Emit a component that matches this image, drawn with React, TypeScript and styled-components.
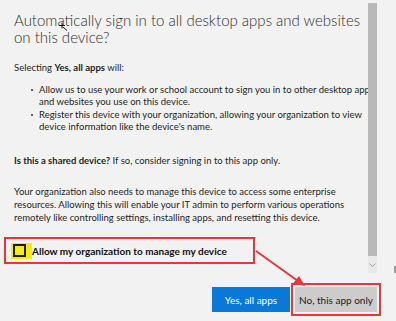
import React from "react";
import styled, { createGlobalStyle } from "styled-components";

const GlobalStyle = createGlobalStyle`
  html, body {
    margin: 0;
    padding: 0;
    background: #f2f2f2;
  }
  * {
    box-sizing: border-box;
  }
`;

const Page = styled.div`
  position: relative;
  width: 396px;
  height: 321px;
  overflow: hidden;
  background: #f2f2f2;
  display: flex;
  flex-direction: column;
  font-family: "Segoe UI", Lato, "Open Sans", sans-serif;
  color: #1f1f1f;
`;

const Main = styled.div`
  display: flex;
  height: 273px;
`;

const Content = styled.div`
  width: 368px;
  flex: none;
  padding: 12px 0 0 14px;
  overflow: hidden;
`;

const Title = styled.h1`
  margin: 0;
  font-size: 15px;
  font-weight: 300;
  line-height: 17px;
  color: #2e2e2e;
`;

const Text = styled.p`
  margin: ${(p: { $top: number }) => p.$top}px 0 0;
  font-size: 9.5px;
  line-height: 13px;
  white-space: nowrap;
`;

const BulletList = styled.ul`
  list-style: none;
  margin: 10px 0 0;
  padding: 0 0 0 25px;
  font-size: 9.5px;
  line-height: 12px;
  white-space: nowrap;
`;

const Bullet = styled.li`
  position: relative;
  margin-bottom: 1px;

  &::before {
    content: "";
    position: absolute;
    left: -8px;
    top: 5px;
    width: 2px;
    height: 2px;
    border-radius: 50%;
    background: #333;
  }
`;

const Highlight = styled.div`
  margin: 13px 0 0 -10px;
  width: 251px;
  height: 27px;
  border: 2px solid #e8363b;
  display: flex;
  align-items: center;
  padding-left: 5px;
`;

const Marker = styled.span`
  width: 21px;
  height: 16px;
  background: #f5ee00;
  display: flex;
  align-items: center;
  padding-left: 2px;
`;

const Box = styled.span`
  width: 13px;
  height: 13px;
  border: 2px solid #1b1b1b;
`;

const CheckLabel = styled.span`
  font-size: 10px;
  font-weight: 700;
  color: #111;
  white-space: nowrap;
`;

const Dot = styled.div`
  margin: 9px 0 0 1px;
  width: 2px;
  height: 2px;
  background: #7aa8dc;
`;

const ScrollTrack = styled.div`
  width: 9px;
  margin-top: 3px;
  display: flex;
  flex-direction: column;
`;

const Thumb = styled.div`
  flex: 1;
  background: #b9b9b9;
`;

const ScrollButton = styled.div`
  height: 17px;
  background: #e9e9e9;
  display: flex;
  align-items: center;
  justify-content: center;
`;

const Footer = styled.div`
  display: flex;
  align-items: center;
  margin-top: 10px;
  padding-left: 212px;
  gap: 1px;
`;

const Button = styled.button<{ $primary?: boolean }>`
  height: 25px;
  width: ${(p) => (p.$primary ? 78 : 82)}px;
  border: none;
  padding: 0;
  font-family: "Segoe UI", Lato, "Open Sans", sans-serif;
  font-size: 10px;
  background: ${(p) => (p.$primary ? "#0a78d6" : "#cccccc")};
  color: ${(p) => (p.$primary ? "#ffffff" : "#1a1a1a")};
`;

const Callout = styled.div`
  border: 2px solid #e8363b;
  padding: 2px;
  display: flex;
`;

const Overlay = styled.svg`
  position: absolute;
  left: 0;
  top: 0;
  pointer-events: none;
`;

export default function App() {
  return (
    <>
      <GlobalStyle />
      <Page>
        <Main>
          <Content>
            <Title>
              Automatically sign in to all desktop apps and websites
              <br />
              on this device?
            </Title>
            <Text $top={15}>
              Selecting <b>Yes, all apps</b> will:
            </Text>
            <BulletList>
              <Bullet>
                Allow us to use your work or school account to sign you in to other desktop apps
                <br />
                and websites you use on this device.
              </Bullet>
              <Bullet>
                Register this device with your organization, allowing your organization to view
                <br />
                device information like the device's name.
              </Bullet>
            </BulletList>
            <Text $top={21}>
              <b>Is this a shared device?</b> If so, consider signing in to this app only.
            </Text>
            <Text $top={18}>
              Your organization also needs to manage this device to access some enterprise
              <br />
              resources. Allowing this will enable your IT admin to perform various operations
              <br />
              remotely like controlling settings, installing apps, and resetting this device.
            </Text>
            <Highlight>
              <Marker>
                <Box />
              </Marker>
              <CheckLabel>Allow my organization to manage my device</CheckLabel>
            </Highlight>
            <Dot />
          </Content>
          <ScrollTrack>
            <Thumb />
            <ScrollButton>
              <svg width="7" height="4" viewBox="0 0 7 4">
                <path d="M0.5 0.5 L3.5 3.5 L6.5 0.5" fill="none" stroke="#9a9a9a" strokeWidth="1" />
              </svg>
            </ScrollButton>
          </ScrollTrack>
        </Main>
        <Footer>
          <Button $primary>Yes, all apps</Button>
          <Callout>
            <Button>No, this app only</Button>
          </Callout>
        </Footer>
        <Overlay width="396" height="321" viewBox="0 0 396 321">
          <line x1="256" y1="251" x2="298" y2="281" stroke="#e8363b" strokeWidth="2" />
          <path d="M305 286 L293 283.5 L299 276 Z" fill="#e8363b" />
          <g stroke="#111" strokeWidth="1" fill="none">
            <line x1="59" y1="25.5" x2="65" y2="25.5" />
            <line x1="62" y1="22.5" x2="62" y2="28.5" />
            <line x1="63" y1="27" x2="67" y2="30.5" />
          </g>
          <rect x="394" y="266" width="2" height="7" fill="#9a9a9a" />
        </Overlay>
      </Page>
    </>
  );
}
